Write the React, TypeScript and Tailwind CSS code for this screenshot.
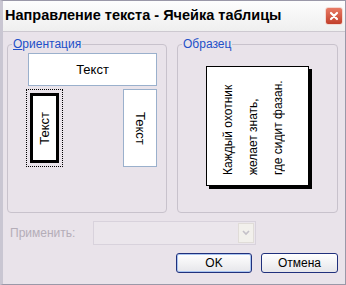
import React from 'react';

const font = { fontFamily: '"Liberation Sans", Arial, sans-serif' };

export default function App() {
  return (
    <div
      className="w-[346px] h-[285px] bg-[#e9e3ea] border border-[#9a98a8] border-l-[3px] border-l-[#c9c6d2] flex flex-col overflow-hidden text-[12px] text-black"
      style={font}
    >
      {/* Title bar */}
      <div className="h-[31px] flex items-center justify-between pl-[2px] pr-[2px] bg-gradient-to-b from-[#fdfdfd] to-[#efefef] border-b border-[#cdc9d0]">
        <span className="text-[14.5px] font-bold">Направление текста - Ячейка таблицы</span>
        <div className="w-[18px] h-[18px] rounded-[3px] bg-gradient-to-b from-[#e87a64] to-[#c23e2a] border border-[#f4d8d2] flex items-center justify-center">
          <svg width="10" height="10" viewBox="0 0 10 10">
            <path d="M2 2 L8 8 M8 2 L2 8" stroke="white" strokeWidth="2.2" strokeLinecap="round" />
          </svg>
        </div>
      </div>

      <div className="flex-1 flex flex-col pl-[4px] pr-[6px] pt-[3px]">
        <div className="flex gap-[10px]">
          {/* Orientation */}
          <fieldset className="w-[160px] h-[178px] border border-[#c8c2cc] rounded-[4px] pl-[18px] pr-[9px]">
            <legend className="text-[#2250c8] px-[1px] ml-[-14px] text-[12px]">
              <span className="underline">О</span>риентация
            </legend>
            <div className="ml-[2px] h-[33px] bg-white border border-[#9ab0cc] flex items-center justify-center text-[13px]">
              Текст
            </div>
            <div className="flex justify-between mt-[3px]">
              <div className="w-[37px] h-[78px] border border-dotted border-black p-[3px]">
                <div className="w-full h-full bg-white border-[3px] border-black flex items-center justify-center">
                  <span className="[writing-mode:vertical-rl] rotate-180 text-[13px]">Текст</span>
                </div>
              </div>
              <div className="w-[34px] h-[78px] bg-white border border-[#9ab0cc] flex items-center justify-center">
                <span className="[writing-mode:vertical-rl] text-[13px]">Текст</span>
              </div>
            </div>
          </fieldset>

          {/* Sample */}
          <fieldset className="w-[161px] h-[178px] border border-[#c8c2cc] rounded-[4px] flex justify-center">
            <legend className="text-[#2250c8] px-[1px] ml-[4px] text-[12px]">Образец</legend>
            <div className="mt-[13px] w-[103px] h-[120px] bg-white border border-black shadow-[3px_3px_0_0_#000] flex justify-start pl-[9px] py-[10px]">
              <p className="[writing-mode:vertical-rl] rotate-180 text-[12px] leading-[25px] text-left">
                Каждый охотник<br />
                желает знать,<br />
                где сидит фазан.
              </p>
            </div>
          </fieldset>
        </div>

        {/* Apply row */}
        <div className="flex items-center mt-[8px]">
          <span className="w-[86px] pl-[3px] text-[#b4adb8] text-[12px]">Применить:</span>
          <div className="w-[163px] h-[24px] border border-[#d8d2dc] bg-[#ebe6ec] flex justify-end items-center pr-[1px]">
            <div className="w-[16px] h-[20px] bg-[#f2f0ec] border border-[#e0dcd8] flex items-center justify-center">
              <svg width="8" height="6" viewBox="0 0 8 6">
                <path d="M1 1 L4 4 L7 1" stroke="#c4c0c8" strokeWidth="1.6" fill="none" />
              </svg>
            </div>
          </div>
        </div>

        {/* Buttons */}
        <div className="flex justify-end gap-[9px] mt-[8px] pr-[1px]">
          <button className="w-[76px] h-[20px] rounded-[3px] border border-[#20307c] bg-gradient-to-b from-white to-[#e6e6ea] shadow-[inset_0_0_0_1px_#a8c4f0] text-[12px]">
            OK
          </button>
          <button className="w-[77px] h-[20px] rounded-[3px] border border-[#20307c] bg-gradient-to-b from-white to-[#e6e6ea] text-[12px]">
            Отмена
          </button>
        </div>
      </div>
    </div>
  );
}
